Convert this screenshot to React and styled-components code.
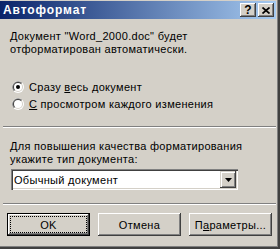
import React from "react";
import styled, { createGlobalStyle } from "styled-components";

const Global = createGlobalStyle`
  html, body { margin: 0; padding: 0; background: #d4d0c8; }
  body { font-family: "Liberation Sans", Arial, sans-serif; font-size: 11px; letter-spacing: 0.3px; color: #000; }
`;

const Window = styled.div`
  width: 280px;
  height: 249px;
  box-sizing: border-box;
  background: #d4d0c8;
  display: flex;
  flex-direction: column;
  padding: 1px 4px 3px 0;
  box-shadow: inset -2px -2px #404040, inset -3px -3px #808080;
`;

const TitleBar = styled.div`
  height: 18px;
  display: flex;
  align-items: center;
  padding: 0 2px 0 3px;
  background: linear-gradient(to right, #0a246a, #a6caf0);
`;

const TitleText = styled.div`
  flex: 1;
  color: #fff;
  font-weight: bold;
  font-size: 12px;
  letter-spacing: 0.9px;
`;

const CaptionButton = styled.div`
  width: 16px;
  height: 14px;
  box-sizing: border-box;
  margin-left: ${(p) => p.$gap || 0}px;
  background: #d4d0c8;
  box-shadow: inset -1px -1px #404040, inset 1px 1px #fff, inset -2px -2px #808080;
  display: flex;
  align-items: center;
  justify-content: center;
  font-weight: bold;
  font-size: 12px;
  letter-spacing: 0;
  line-height: 14px;
  color: #000;
`;

const Content = styled.div`
  flex: 1;
  display: flex;
  flex-direction: column;
  padding-left: 10px;
`;

const Text = styled.div`
  line-height: 13px;
  margin-top: ${(p) => p.$mt || 0}px;
`;

const RadioGroup = styled.div`
  margin-top: 22px;
  display: flex;
  flex-direction: column;
`;

const RadioRow = styled.div`
  height: 17px;
  display: flex;
  align-items: center;
  gap: 5px;
  padding-left: 2px;
`;

const U = styled.span`
  text-decoration: underline;
`;

const Separator = styled.div`
  height: 0;
  border-top: 1px solid #808080;
  border-bottom: 1px solid #fff;
  margin: ${(p) => p.$mt}px 0 0 -7px;
`;

const Combo = styled.div`
  margin: 3px 0 0 1px;
  width: 227px;
  height: 21px;
  box-sizing: border-box;
  background: #fff;
  box-shadow: inset 1px 1px #808080, inset 2px 2px #404040, inset -1px -1px #fff, inset -2px -2px #d4d0c8;
  display: flex;
  align-items: center;
  padding: 2px;
`;

const ComboText = styled.div`
  flex: 1;
  padding-left: 1px;
`;

const ArrowButton = styled.div`
  width: 16px;
  height: 17px;
  box-sizing: border-box;
  background: #d4d0c8;
  box-shadow: inset -1px -1px #404040, inset 1px 1px #d4d0c8, inset 2px 2px #fff, inset -2px -2px #808080;
  display: flex;
  align-items: center;
  justify-content: center;
`;

const ButtonRow = styled.div`
  display: flex;
  gap: 8px;
  margin: 8px 0 0 -3px;
`;

const Button = styled.div`
  width: 83px;
  height: 23px;
  box-sizing: border-box;
  background: #d4d0c8;
  display: flex;
  align-items: center;
  justify-content: center;
  position: relative;
  box-shadow: ${(p) =>
    p.$default
      ? "inset -1px -1px #000, inset 1px 1px #000, inset -2px -2px #404040, inset 2px 2px #fff, inset -3px -3px #808080"
      : "inset -1px -1px #404040, inset 1px 1px #fff, inset -2px -2px #808080"};
`;

const Focus = styled.div`
  position: absolute;
  left: 4px;
  top: 4px;
  right: 4px;
  bottom: 4px;
  outline: 1px dotted #000;
`;

const Radio = ({ checked }) => (
  <svg width="12" height="12" viewBox="0 0 12 12">
    <circle cx="6" cy="6" r="6" fill="#fff" />
    <path d="M10.24 1.76 A6 6 0 0 0 1.76 10.24 Z" fill="#808080" />
    <circle cx="6" cy="6" r="5" fill="#d4d0c8" />
    <path d="M9.54 2.46 A5 5 0 0 0 2.46 9.54 Z" fill="#404040" />
    <circle cx="6" cy="6" r="4" fill="#fff" />
    {checked && <circle cx="6" cy="6" r="2" fill="#000" />}
  </svg>
);

export default function App() {
  return (
    <>
      <Global />
      <Window>
        <TitleBar>
          <TitleText>Автоформат</TitleText>
          <CaptionButton>?</CaptionButton>
          <CaptionButton $gap={2}>
            <svg width="8" height="7" viewBox="0 0 8 7">
              <path d="M0.5 0.5 L7.5 6.5 M7.5 0.5 L0.5 6.5" stroke="#000" strokeWidth="1.7" />
            </svg>
          </CaptionButton>
        </TitleBar>
        <Content>
          <Text $mt={11}>
            Документ "Word_2000.doc" будет
            <br />
            отформатирован автоматически.
          </Text>
          <RadioGroup>
            <RadioRow>
              <Radio checked />
              <span>
                Сразу <U>в</U>есь документ
              </span>
            </RadioRow>
            <RadioRow>
              <Radio />
              <span>
                <U>С</U> просмотром каждого изменения
              </span>
            </RadioRow>
          </RadioGroup>
          <Separator $mt={14} />
          <Text $mt={12}>
            <U>Д</U>ля повышения качества форматирования
            <br />
            укажите тип документа:
          </Text>
          <Combo>
            <ComboText>Обычный документ</ComboText>
            <ArrowButton>
              <svg width="7" height="4" viewBox="0 0 7 4">
                <path d="M0 0 H7 L3.5 4 Z" fill="#000" />
              </svg>
            </ArrowButton>
          </Combo>
          <Separator $mt={13} />
          <ButtonRow>
            <Button $default>
              <Focus />
              OK
            </Button>
            <Button>Отмена</Button>
            <Button>
              <span>
                П<U>а</U>раметры...
              </span>
            </Button>
          </ButtonRow>
        </Content>
      </Window>
    </>
  );
}
